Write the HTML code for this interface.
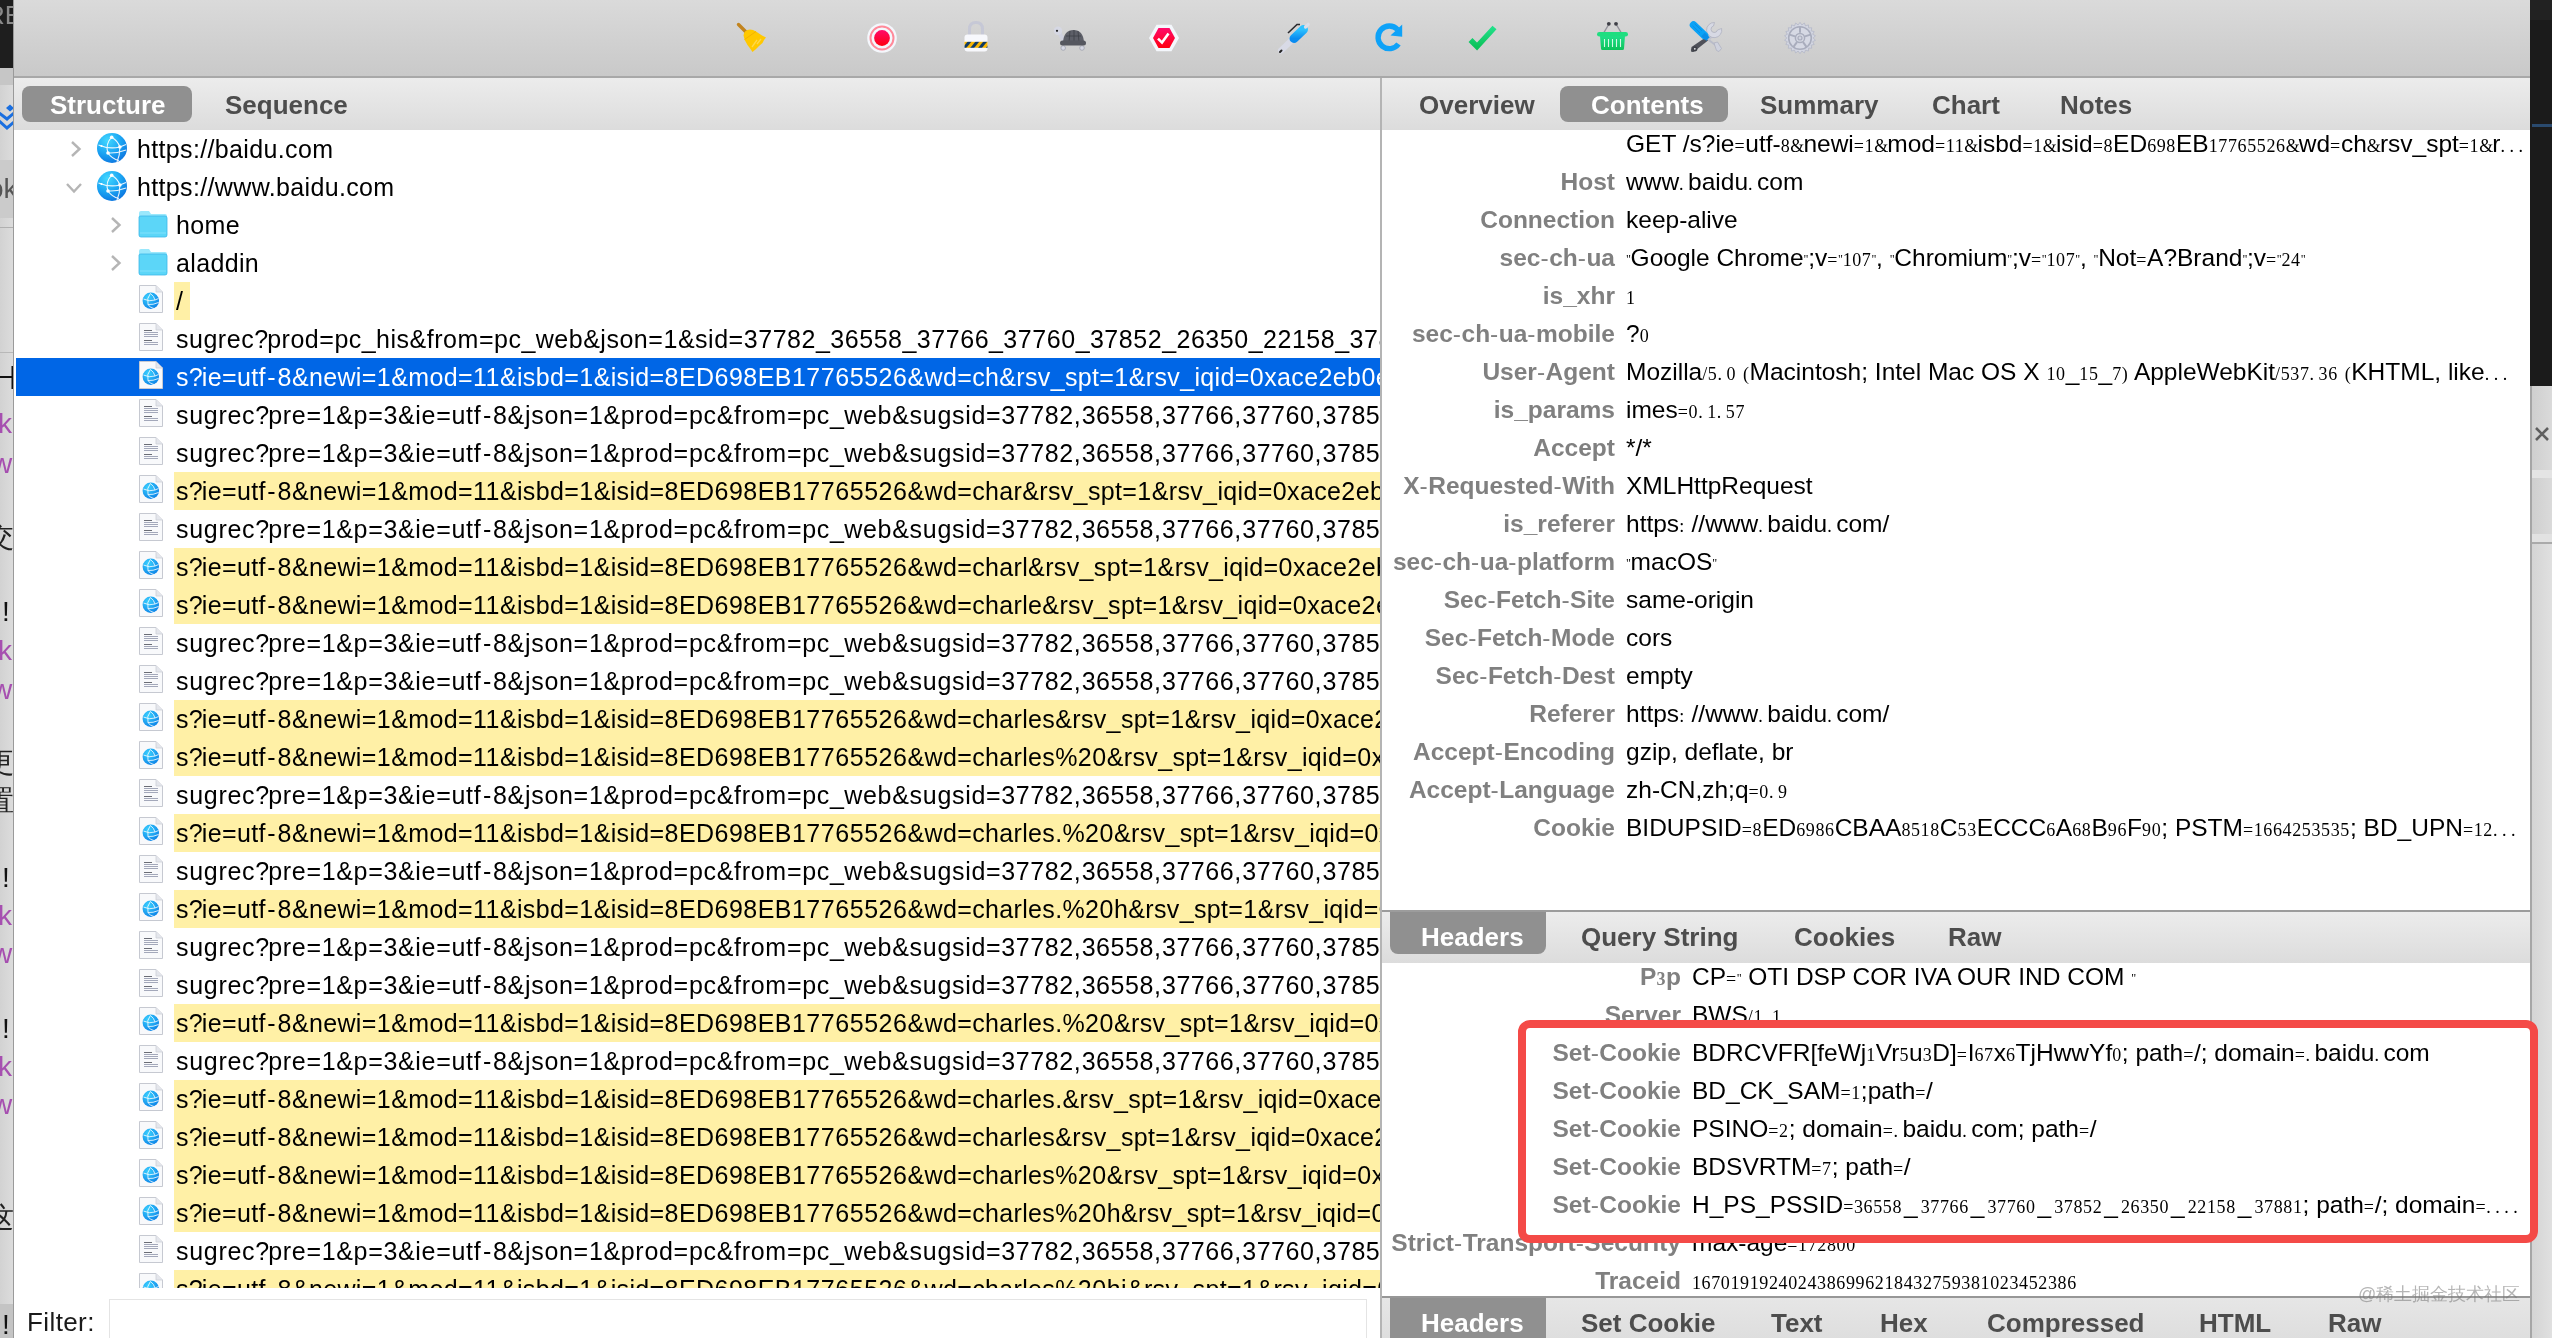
<!DOCTYPE html><html><head><meta charset="utf-8"><style>
*{margin:0;padding:0;box-sizing:border-box}
html,body{width:2552px;height:1338px;overflow:hidden;background:#fff;font-family:"Liberation Sans", sans-serif}
body{-webkit-font-smoothing:antialiased}
.gs{will-change:transform}
.abs{position:absolute}
.tb{position:absolute;left:14px;top:0;width:2516px;height:78px;background:linear-gradient(#dadada,#c9c9c9);border-bottom:2px solid #a8a8a8}
.tabbar{position:absolute;background:linear-gradient(#ececec,#dcdcdc)}
.pill{position:absolute;background:#909090;border-radius:8px}
.tab{position:absolute;font-weight:bold;font-size:26px;color:#4d4d4d;white-space:nowrap;line-height:30px}
.tab.sel{color:#fff}
.row{position:absolute;left:14px;width:1366px;height:38px}
.rt{position:absolute;font-size:25px;line-height:38px;white-space:nowrap;color:#000;letter-spacing:0.35px}
.dg{letter-spacing:0.55px}
.qm{letter-spacing:-0.95px}
.hy{letter-spacing:1.85px;padding-left:1.5px}
.us{letter-spacing:0.35px}
.cm{letter-spacing:1.05px}
.u{padding-left:2px;letter-spacing:3px}
.amp{font-family:"Liberation Serif", serif;font-size:18px;letter-spacing:-0.9px}
.lh{font-weight:normal;letter-spacing:0.5px}
.hl{position:absolute;background:#fff0a6;height:38px}
.lbl{position:absolute;font-weight:bold;font-size:25px;color:#808080;white-space:nowrap;line-height:38px;text-align:right}
.val{position:absolute;font-size:25px;color:#000;white-space:nowrap;line-height:38px}
.s{font-family:"Liberation Serif", serif;font-size:18px;letter-spacing:0.62px}
.q{font-family:"Liberation Serif", serif;font-size:12px;letter-spacing:-0.3px;vertical-align:3px}
.d{font-family:"Liberation Serif", serif;font-size:18px;letter-spacing:4.5px}
.lbl,.val{font-size:24.5px}
</style></head><body><div class="gs" style="position:absolute;left:0;top:0;width:2552px;height:1338px;overflow:hidden">
<div class="abs" style="left:0;top:0;width:14px;height:1338px;background:linear-gradient(90deg,#d2d2d2,#dcdcdc);border-right:1.5px solid #9a9a9a;overflow:hidden"><div class="abs" style="left:0;top:0;width:14px;height:68px;background:#1e1e1e"></div><div class="abs" style="left:-14px;top:0;font-size:26px;color:#8a8a8a;line-height:30px">RE</div><div class="abs" style="left:0;top:68px;width:14px;height:17px;background:#c6c6c6"></div><div class="abs" style="left:0;top:160px;width:14px;height:58px;background:#cbcbcb"></div><div class="abs" style="left:-12px;top:172px;font-size:28px;color:#555;line-height:34px">ok</div><div class="abs" style="left:0;top:227px;width:14px;height:1px;background:#b0b0b0"></div><div class="abs" style="left:0;top:352px;width:14px;height:1px;background:#b8b8b8"></div><div class="abs" style="left:0;top:1304px;width:14px;height:34px;background:#c4c4c4"></div><svg class="abs" style="left:0;top:100px" width="14" height="34" viewBox="0 0 14 34"><path d="M6 8 L10 4.5 L14 8 L10 11.5 Z" fill="#1a6fe0"/><path d="M-2 12 L7 19 L14 13" fill="none" stroke="#1a6fe0" stroke-width="3"/><path d="M-2 20 L7 28 L14 22" fill="none" stroke="#1a6fe0" stroke-width="3"/></svg><svg class="abs" style="left:0;top:362px" width="14" height="30" viewBox="0 0 14 30"><path d="M0 15 L12 15 M12.5 4 L12.5 27" stroke="#111" stroke-width="2"/></svg><div class="abs" style="left:-2px;top:405px;font-size:28px;color:#a64fb0;line-height:38px;white-space:nowrap">k</div><div class="abs" style="left:-8px;top:445px;font-size:28px;color:#a64fb0;line-height:38px;white-space:nowrap">w</div><div class="abs" style="left:-14px;top:518px;font-size:28px;color:#222;line-height:38px;white-space:nowrap">交</div><div class="abs" style="left:2px;top:593px;font-size:28px;color:#111;line-height:38px;white-space:nowrap">!</div><div class="abs" style="left:-2px;top:632px;font-size:28px;color:#a64fb0;line-height:38px;white-space:nowrap">k</div><div class="abs" style="left:-8px;top:671px;font-size:28px;color:#a64fb0;line-height:38px;white-space:nowrap">w</div><div class="abs" style="left:-14px;top:744px;font-size:28px;color:#222;line-height:38px;white-space:nowrap">更</div><div class="abs" style="left:-14px;top:782px;font-size:28px;color:#222;line-height:38px;white-space:nowrap">置</div><div class="abs" style="left:2px;top:859px;font-size:28px;color:#111;line-height:38px;white-space:nowrap">!</div><div class="abs" style="left:-2px;top:897px;font-size:28px;color:#a64fb0;line-height:38px;white-space:nowrap">k</div><div class="abs" style="left:-8px;top:935px;font-size:28px;color:#a64fb0;line-height:38px;white-space:nowrap">w</div><div class="abs" style="left:2px;top:1010px;font-size:28px;color:#111;line-height:38px;white-space:nowrap">!</div><div class="abs" style="left:-2px;top:1048px;font-size:28px;color:#a64fb0;line-height:38px;white-space:nowrap">k</div><div class="abs" style="left:-8px;top:1086px;font-size:28px;color:#a64fb0;line-height:38px;white-space:nowrap">w</div><div class="abs" style="left:-14px;top:1199px;font-size:28px;color:#222;line-height:38px;white-space:nowrap">这</div><div class="abs" style="left:2px;top:1306px;font-size:28px;color:#111;line-height:38px;white-space:nowrap">!</div></div>
<div class="tb"></div>
<div class="tabbar" style="left:14px;top:78px;width:1366px;height:52px"></div>
<div class="pill" style="left:22px;top:86px;width:170px;height:36px"></div>
<div class="tab sel" style="left:50px;top:90px">Structure</div>
<div class="tab" style="left:225px;top:90px">Sequence</div>
<div class="abs" style="left:1380px;top:78px;width:2px;height:1260px;background:#b4b4b4"></div>
<div class="tabbar" style="left:1382px;top:78px;width:1148px;height:52px"></div>
<div class="pill" style="left:1560px;top:86px;width:168px;height:36px"></div>
<div class="tab" style="left:1419px;top:90px">Overview</div>
<div class="tab sel" style="left:1591px;top:90px">Contents</div>
<div class="tab" style="left:1760px;top:90px">Summary</div>
<div class="tab" style="left:1932px;top:90px">Chart</div>
<div class="tab" style="left:2060px;top:90px">Notes</div>
<div class="abs" style="left:2530px;top:0;width:22px;height:386px;background:#1b1b1b"></div>
<div class="abs" style="left:2530px;top:0;width:22px;height:20px;background:#222"></div>
<div class="abs" style="left:2532px;top:124px;width:20px;height:3px;background:#2a4a6e"></div>
<div class="abs" style="left:2530px;top:386px;width:22px;height:952px;background:linear-gradient(90deg,#cfcfcf,#dadada);border-left:2px solid #a6a6a6"></div>
<div class="abs" style="left:2532px;top:470px;width:20px;height:8px;background:#e4e4e4"></div>
<div class="abs" style="left:2532px;top:534px;width:20px;height:8px;background:#e2e2e2"></div>
<div class="abs" style="left:2532px;top:542px;width:20px;height:2px;background:#aaaaaa"></div>
<div class="abs" style="left:2532px;top:544px;width:20px;height:794px;background:linear-gradient(90deg,#d4d4d4,#e0e0e0)"></div>
<svg class="abs" style="left:2530px;top:370px" width="22" height="80" viewBox="0 0 22 80"><path d="M0 16 Q6 16 7 16 L0 16 Z" fill="#aaa"/><path d="M6 58 L18 70 M18 58 L6 70" stroke="#5e5e5e" stroke-width="2.6"/></svg>
<div class="abs" style="left:14px;top:130px;width:1366px;height:1158px;overflow:hidden">
<svg class="abs" style="left:82px;top:2px" width="32" height="32" viewBox="0 0 32 32"><defs><radialGradient id="gb0" cx="0.35" cy="0.25" r="0.85"><stop offset="0" stop-color="#42d8ff"/><stop offset="0.55" stop-color="#1aa2f2"/><stop offset="1" stop-color="#0a6edc"/></radialGradient></defs><circle cx="16" cy="16" r="15" fill="url(#gb0)"/><g fill="none" stroke="#fff" stroke-width="1.1" opacity="0.9"><path d="M15.7 5.2 Q9 12 12 21"/><path d="M15.7 5.2 Q22 9 23.9 15"/><path d="M2.5 13 Q13 17.5 23.9 15 L30 12.5"/><path d="M12 21 Q21 21.5 30 18"/><path d="M12 21 Q16 27 23 28.5"/><path d="M23.9 15 Q24 23 21 30"/></g><g fill="#fff"><circle cx="15.7" cy="5.2" r="1.8"/><circle cx="23.9" cy="15" r="1.8"/><circle cx="12" cy="21" r="1.8"/><circle cx="5.5" cy="14" r="1.1"/></g></svg>
<svg class="abs" style="left:56px;top:10px" width="12" height="18" viewBox="0 0 12 18"><path d="M2 2 L9.5 9 L2 16" fill="none" stroke="#b5b5b5" stroke-width="2.4"/></svg>
<div class="rt" style="left:123px;top:0px;color:#000">https://baidu.com</div>
<svg class="abs" style="left:82px;top:40px" width="32" height="32" viewBox="0 0 32 32"><defs><radialGradient id="gb1" cx="0.35" cy="0.25" r="0.85"><stop offset="0" stop-color="#42d8ff"/><stop offset="0.55" stop-color="#1aa2f2"/><stop offset="1" stop-color="#0a6edc"/></radialGradient></defs><circle cx="16" cy="16" r="15" fill="url(#gb1)"/><g fill="none" stroke="#fff" stroke-width="1.1" opacity="0.9"><path d="M15.7 5.2 Q9 12 12 21"/><path d="M15.7 5.2 Q22 9 23.9 15"/><path d="M2.5 13 Q13 17.5 23.9 15 L30 12.5"/><path d="M12 21 Q21 21.5 30 18"/><path d="M12 21 Q16 27 23 28.5"/><path d="M23.9 15 Q24 23 21 30"/></g><g fill="#fff"><circle cx="15.7" cy="5.2" r="1.8"/><circle cx="23.9" cy="15" r="1.8"/><circle cx="12" cy="21" r="1.8"/><circle cx="5.5" cy="14" r="1.1"/></g></svg>
<svg class="abs" style="left:51px;top:52px" width="18" height="12" viewBox="0 0 18 12"><path d="M2 2 L9 9.5 L16 2" fill="none" stroke="#b5b5b5" stroke-width="2.4"/></svg>
<div class="rt" style="left:123px;top:38px;color:#000">https://www.baidu.com</div>
<svg class="abs" style="left:124px;top:80px" width="30" height="28" viewBox="0 0 30 28"><path d="M1 3 Q1 1 3 1 L11 1 L13 4 L27 4 Q29 4 29 6 L29 25 Q29 27 27 27 L3 27 Q1 27 1 25 Z" fill="#9ae8fc"/><path d="M1 7 Q1 6 3 6 L27 6 Q29 6 29 8 L29 25 Q29 27 27 27 L3 27 Q1 27 1 25 Z" fill="#5cd6f8" stroke="#3cb8e8" stroke-width="0.8"/><line x1="2" y1="23" x2="28" y2="23" stroke="#8ce4fc" stroke-width="0.8"/></svg>
<svg class="abs" style="left:96px;top:86px" width="12" height="18" viewBox="0 0 12 18"><path d="M2 2 L9.5 9 L2 16" fill="none" stroke="#b5b5b5" stroke-width="2.4"/></svg>
<div class="rt" style="left:162px;top:76px;color:#000">home</div>
<svg class="abs" style="left:124px;top:118px" width="30" height="28" viewBox="0 0 30 28"><path d="M1 3 Q1 1 3 1 L11 1 L13 4 L27 4 Q29 4 29 6 L29 25 Q29 27 27 27 L3 27 Q1 27 1 25 Z" fill="#9ae8fc"/><path d="M1 7 Q1 6 3 6 L27 6 Q29 6 29 8 L29 25 Q29 27 27 27 L3 27 Q1 27 1 25 Z" fill="#5cd6f8" stroke="#3cb8e8" stroke-width="0.8"/><line x1="2" y1="23" x2="28" y2="23" stroke="#8ce4fc" stroke-width="0.8"/></svg>
<svg class="abs" style="left:96px;top:124px" width="12" height="18" viewBox="0 0 12 18"><path d="M2 2 L9.5 9 L2 16" fill="none" stroke="#b5b5b5" stroke-width="2.4"/></svg>
<div class="rt" style="left:162px;top:114px;color:#000">aladdin</div>
<svg class="abs" style="left:124px;top:154px" width="26" height="30" viewBox="0 0 26 30"><defs><radialGradient id="dg" cx="0.35" cy="0.3" r="0.8"><stop offset="0" stop-color="#3ad2ff"/><stop offset="1" stop-color="#0a7ee6"/></radialGradient></defs><path d="M1.5 1.5 L18 1.5 L24.5 8 L24.5 28.5 L1.5 28.5 Z" fill="#f8f9fb" stroke="#c6c9d1" stroke-width="1"/><path d="M18 1.5 L18 8 L24.5 8" fill="#e4e6ec" stroke="#cdd0d8" stroke-width="0.8"/><circle cx="12.8" cy="16.8" r="8.2" fill="url(#dg)"/><g fill="none" stroke="#fff" stroke-width="0.9" opacity="0.9"><path d="M12.4 9.5 Q8.5 14 10 20.5"/><path d="M12.4 9.5 Q16 12 17 16"/><path d="M5.5 15 Q11 18 17 16 L20.5 14.5"/><path d="M10 20.5 Q15 21 20.5 18.5"/><path d="M10 20.5 Q12 24 16 24.5"/></g></svg>
<div class="abs" style="left:160px;top:152px;width:16px;height:38px;background:#fff0a6"></div>
<div class="rt" style="left:162px;top:152px;color:#000">/</div>
<svg class="abs" style="left:124px;top:192px" width="26" height="30" viewBox="0 0 26 30"><path d="M1.5 1.5 L18 1.5 L24.5 8 L24.5 28.5 L1.5 28.5 Z" fill="#f8f9fb" stroke="#c6c9d1" stroke-width="1"/><path d="M18 1.5 L18 8 L24.5 8" fill="#e4e6ec" stroke="#cdd0d8" stroke-width="0.8"/><g stroke-width="1"><line x1="6" y1="8.5" x2="14" y2="8.5" stroke="#6a6d76"/><line x1="6" y1="10.5" x2="20" y2="10.5" stroke="#a3a8ba"/><line x1="6" y1="12.5" x2="20" y2="12.5" stroke="#a3a8ba"/><line x1="6" y1="14.5" x2="20" y2="14.5" stroke="#a3a8ba"/><line x1="6" y1="18.5" x2="14" y2="18.5" stroke="#6a6d76"/><line x1="6" y1="20.5" x2="20" y2="20.5" stroke="#a3a8ba"/><line x1="6" y1="22.5" x2="20" y2="22.5" stroke="#a3a8ba"/></g></svg>
<div class="rt" style="left:162px;top:190px;color:#000;letter-spacing:0.52px">sugrec<span class="qm">?</span>prod=pc<span class="us">_</span>his&amp;from=pc<span class="us">_</span>web&amp;json=<span class="dg">1</span>&amp;sid=<span class="dg">37782</span><span class="us">_</span><span class="dg">36558</span><span class="us">_</span><span class="dg">37766</span><span class="us">_</span><span class="dg">37760</span><span class="us">_</span><span class="dg">37852</span><span class="us">_</span><span class="dg">26350</span><span class="us">_</span><span class="dg">22158</span><span class="us">_</span><span class="dg">37881</span></div>
<div class="abs" style="left:2px;top:228px;width:1364px;height:38px;background:#0066e6"></div>
<svg class="abs" style="left:124px;top:230px" width="26" height="30" viewBox="0 0 26 30"><defs><radialGradient id="dg" cx="0.35" cy="0.3" r="0.8"><stop offset="0" stop-color="#3ad2ff"/><stop offset="1" stop-color="#0a7ee6"/></radialGradient></defs><path d="M1.5 1.5 L18 1.5 L24.5 8 L24.5 28.5 L1.5 28.5 Z" fill="#f8f9fb" stroke="#c6c9d1" stroke-width="1"/><path d="M18 1.5 L18 8 L24.5 8" fill="#e4e6ec" stroke="#cdd0d8" stroke-width="0.8"/><circle cx="12.8" cy="16.8" r="8.2" fill="url(#dg)"/><g fill="none" stroke="#fff" stroke-width="0.9" opacity="0.9"><path d="M12.4 9.5 Q8.5 14 10 20.5"/><path d="M12.4 9.5 Q16 12 17 16"/><path d="M5.5 15 Q11 18 17 16 L20.5 14.5"/><path d="M10 20.5 Q15 21 20.5 18.5"/><path d="M10 20.5 Q12 24 16 24.5"/></g></svg>
<div class="rt" style="left:162px;top:228px;color:#fff">s<span class="qm">?</span>ie=utf<span class="hy">-</span><span class="dg">8</span>&amp;newi=<span class="dg">1</span>&amp;mod=<span class="dg">11</span>&amp;isbd=<span class="dg">1</span>&amp;isid=<span class="dg">8</span>ED<span class="dg">698</span>EB<span class="dg">17765526</span>&amp;wd=ch&amp;rsv<span class="us">_</span>spt=<span class="dg">1</span>&amp;rsv<span class="us">_</span>iqid=<span class="dg">0</span>xace<span class="dg">2</span>eb<span class="dg">0</span>e<span class="dg">0000</span></div>
<svg class="abs" style="left:124px;top:268px" width="26" height="30" viewBox="0 0 26 30"><path d="M1.5 1.5 L18 1.5 L24.5 8 L24.5 28.5 L1.5 28.5 Z" fill="#f8f9fb" stroke="#c6c9d1" stroke-width="1"/><path d="M18 1.5 L18 8 L24.5 8" fill="#e4e6ec" stroke="#cdd0d8" stroke-width="0.8"/><g stroke-width="1"><line x1="6" y1="8.5" x2="14" y2="8.5" stroke="#6a6d76"/><line x1="6" y1="10.5" x2="20" y2="10.5" stroke="#a3a8ba"/><line x1="6" y1="12.5" x2="20" y2="12.5" stroke="#a3a8ba"/><line x1="6" y1="14.5" x2="20" y2="14.5" stroke="#a3a8ba"/><line x1="6" y1="18.5" x2="14" y2="18.5" stroke="#6a6d76"/><line x1="6" y1="20.5" x2="20" y2="20.5" stroke="#a3a8ba"/><line x1="6" y1="22.5" x2="20" y2="22.5" stroke="#a3a8ba"/></g></svg>
<div class="rt" style="left:162px;top:266px;color:#000;letter-spacing:0.7px">sugrec<span class="qm">?</span>pre=<span class="dg">1</span>&amp;p=<span class="dg">3</span>&amp;ie=utf<span class="hy">-</span><span class="dg">8</span>&amp;json=<span class="dg">1</span>&amp;prod=pc&amp;from=pc<span class="us">_</span>web&amp;sugsid=<span class="dg">37782</span><span class="cm">,</span><span class="dg">36558</span><span class="cm">,</span><span class="dg">37766</span><span class="cm">,</span><span class="dg">37760</span><span class="cm">,</span><span class="dg">37852</span><span class="cm">,</span><span class="dg">26350</span><span class="cm">,</span><span class="dg">22158</span><span class="cm">,</span><span class="dg">37881</span></div>
<svg class="abs" style="left:124px;top:306px" width="26" height="30" viewBox="0 0 26 30"><path d="M1.5 1.5 L18 1.5 L24.5 8 L24.5 28.5 L1.5 28.5 Z" fill="#f8f9fb" stroke="#c6c9d1" stroke-width="1"/><path d="M18 1.5 L18 8 L24.5 8" fill="#e4e6ec" stroke="#cdd0d8" stroke-width="0.8"/><g stroke-width="1"><line x1="6" y1="8.5" x2="14" y2="8.5" stroke="#6a6d76"/><line x1="6" y1="10.5" x2="20" y2="10.5" stroke="#a3a8ba"/><line x1="6" y1="12.5" x2="20" y2="12.5" stroke="#a3a8ba"/><line x1="6" y1="14.5" x2="20" y2="14.5" stroke="#a3a8ba"/><line x1="6" y1="18.5" x2="14" y2="18.5" stroke="#6a6d76"/><line x1="6" y1="20.5" x2="20" y2="20.5" stroke="#a3a8ba"/><line x1="6" y1="22.5" x2="20" y2="22.5" stroke="#a3a8ba"/></g></svg>
<div class="rt" style="left:162px;top:304px;color:#000;letter-spacing:0.7px">sugrec<span class="qm">?</span>pre=<span class="dg">1</span>&amp;p=<span class="dg">3</span>&amp;ie=utf<span class="hy">-</span><span class="dg">8</span>&amp;json=<span class="dg">1</span>&amp;prod=pc&amp;from=pc<span class="us">_</span>web&amp;sugsid=<span class="dg">37782</span><span class="cm">,</span><span class="dg">36558</span><span class="cm">,</span><span class="dg">37766</span><span class="cm">,</span><span class="dg">37760</span><span class="cm">,</span><span class="dg">37852</span><span class="cm">,</span><span class="dg">26350</span><span class="cm">,</span><span class="dg">22158</span><span class="cm">,</span><span class="dg">37881</span></div>
<svg class="abs" style="left:124px;top:344px" width="26" height="30" viewBox="0 0 26 30"><defs><radialGradient id="dg" cx="0.35" cy="0.3" r="0.8"><stop offset="0" stop-color="#3ad2ff"/><stop offset="1" stop-color="#0a7ee6"/></radialGradient></defs><path d="M1.5 1.5 L18 1.5 L24.5 8 L24.5 28.5 L1.5 28.5 Z" fill="#f8f9fb" stroke="#c6c9d1" stroke-width="1"/><path d="M18 1.5 L18 8 L24.5 8" fill="#e4e6ec" stroke="#cdd0d8" stroke-width="0.8"/><circle cx="12.8" cy="16.8" r="8.2" fill="url(#dg)"/><g fill="none" stroke="#fff" stroke-width="0.9" opacity="0.9"><path d="M12.4 9.5 Q8.5 14 10 20.5"/><path d="M12.4 9.5 Q16 12 17 16"/><path d="M5.5 15 Q11 18 17 16 L20.5 14.5"/><path d="M10 20.5 Q15 21 20.5 18.5"/><path d="M10 20.5 Q12 24 16 24.5"/></g></svg>
<div class="abs" style="left:160px;top:342px;width:1206px;height:38px;background:#fff0a6"></div>
<div class="rt" style="left:162px;top:342px;color:#000">s<span class="qm">?</span>ie=utf<span class="hy">-</span><span class="dg">8</span>&amp;newi=<span class="dg">1</span>&amp;mod=<span class="dg">11</span>&amp;isbd=<span class="dg">1</span>&amp;isid=<span class="dg">8</span>ED<span class="dg">698</span>EB<span class="dg">17765526</span>&amp;wd=char&amp;rsv<span class="us">_</span>spt=<span class="dg">1</span>&amp;rsv<span class="us">_</span>iqid=<span class="dg">0</span>xace<span class="dg">2</span>eb<span class="dg">0</span>e<span class="dg">0000</span></div>
<svg class="abs" style="left:124px;top:382px" width="26" height="30" viewBox="0 0 26 30"><path d="M1.5 1.5 L18 1.5 L24.5 8 L24.5 28.5 L1.5 28.5 Z" fill="#f8f9fb" stroke="#c6c9d1" stroke-width="1"/><path d="M18 1.5 L18 8 L24.5 8" fill="#e4e6ec" stroke="#cdd0d8" stroke-width="0.8"/><g stroke-width="1"><line x1="6" y1="8.5" x2="14" y2="8.5" stroke="#6a6d76"/><line x1="6" y1="10.5" x2="20" y2="10.5" stroke="#a3a8ba"/><line x1="6" y1="12.5" x2="20" y2="12.5" stroke="#a3a8ba"/><line x1="6" y1="14.5" x2="20" y2="14.5" stroke="#a3a8ba"/><line x1="6" y1="18.5" x2="14" y2="18.5" stroke="#6a6d76"/><line x1="6" y1="20.5" x2="20" y2="20.5" stroke="#a3a8ba"/><line x1="6" y1="22.5" x2="20" y2="22.5" stroke="#a3a8ba"/></g></svg>
<div class="rt" style="left:162px;top:380px;color:#000;letter-spacing:0.7px">sugrec<span class="qm">?</span>pre=<span class="dg">1</span>&amp;p=<span class="dg">3</span>&amp;ie=utf<span class="hy">-</span><span class="dg">8</span>&amp;json=<span class="dg">1</span>&amp;prod=pc&amp;from=pc<span class="us">_</span>web&amp;sugsid=<span class="dg">37782</span><span class="cm">,</span><span class="dg">36558</span><span class="cm">,</span><span class="dg">37766</span><span class="cm">,</span><span class="dg">37760</span><span class="cm">,</span><span class="dg">37852</span><span class="cm">,</span><span class="dg">26350</span><span class="cm">,</span><span class="dg">22158</span><span class="cm">,</span><span class="dg">37881</span></div>
<svg class="abs" style="left:124px;top:420px" width="26" height="30" viewBox="0 0 26 30"><defs><radialGradient id="dg" cx="0.35" cy="0.3" r="0.8"><stop offset="0" stop-color="#3ad2ff"/><stop offset="1" stop-color="#0a7ee6"/></radialGradient></defs><path d="M1.5 1.5 L18 1.5 L24.5 8 L24.5 28.5 L1.5 28.5 Z" fill="#f8f9fb" stroke="#c6c9d1" stroke-width="1"/><path d="M18 1.5 L18 8 L24.5 8" fill="#e4e6ec" stroke="#cdd0d8" stroke-width="0.8"/><circle cx="12.8" cy="16.8" r="8.2" fill="url(#dg)"/><g fill="none" stroke="#fff" stroke-width="0.9" opacity="0.9"><path d="M12.4 9.5 Q8.5 14 10 20.5"/><path d="M12.4 9.5 Q16 12 17 16"/><path d="M5.5 15 Q11 18 17 16 L20.5 14.5"/><path d="M10 20.5 Q15 21 20.5 18.5"/><path d="M10 20.5 Q12 24 16 24.5"/></g></svg>
<div class="abs" style="left:160px;top:418px;width:1206px;height:38px;background:#fff0a6"></div>
<div class="rt" style="left:162px;top:418px;color:#000">s<span class="qm">?</span>ie=utf<span class="hy">-</span><span class="dg">8</span>&amp;newi=<span class="dg">1</span>&amp;mod=<span class="dg">11</span>&amp;isbd=<span class="dg">1</span>&amp;isid=<span class="dg">8</span>ED<span class="dg">698</span>EB<span class="dg">17765526</span>&amp;wd=charl&amp;rsv<span class="us">_</span>spt=<span class="dg">1</span>&amp;rsv<span class="us">_</span>iqid=<span class="dg">0</span>xace<span class="dg">2</span>eb<span class="dg">0</span>e<span class="dg">0000</span></div>
<svg class="abs" style="left:124px;top:458px" width="26" height="30" viewBox="0 0 26 30"><defs><radialGradient id="dg" cx="0.35" cy="0.3" r="0.8"><stop offset="0" stop-color="#3ad2ff"/><stop offset="1" stop-color="#0a7ee6"/></radialGradient></defs><path d="M1.5 1.5 L18 1.5 L24.5 8 L24.5 28.5 L1.5 28.5 Z" fill="#f8f9fb" stroke="#c6c9d1" stroke-width="1"/><path d="M18 1.5 L18 8 L24.5 8" fill="#e4e6ec" stroke="#cdd0d8" stroke-width="0.8"/><circle cx="12.8" cy="16.8" r="8.2" fill="url(#dg)"/><g fill="none" stroke="#fff" stroke-width="0.9" opacity="0.9"><path d="M12.4 9.5 Q8.5 14 10 20.5"/><path d="M12.4 9.5 Q16 12 17 16"/><path d="M5.5 15 Q11 18 17 16 L20.5 14.5"/><path d="M10 20.5 Q15 21 20.5 18.5"/><path d="M10 20.5 Q12 24 16 24.5"/></g></svg>
<div class="abs" style="left:160px;top:456px;width:1206px;height:38px;background:#fff0a6"></div>
<div class="rt" style="left:162px;top:456px;color:#000">s<span class="qm">?</span>ie=utf<span class="hy">-</span><span class="dg">8</span>&amp;newi=<span class="dg">1</span>&amp;mod=<span class="dg">11</span>&amp;isbd=<span class="dg">1</span>&amp;isid=<span class="dg">8</span>ED<span class="dg">698</span>EB<span class="dg">17765526</span>&amp;wd=charle&amp;rsv<span class="us">_</span>spt=<span class="dg">1</span>&amp;rsv<span class="us">_</span>iqid=<span class="dg">0</span>xace<span class="dg">2</span>eb<span class="dg">0</span>e<span class="dg">0000</span></div>
<svg class="abs" style="left:124px;top:496px" width="26" height="30" viewBox="0 0 26 30"><path d="M1.5 1.5 L18 1.5 L24.5 8 L24.5 28.5 L1.5 28.5 Z" fill="#f8f9fb" stroke="#c6c9d1" stroke-width="1"/><path d="M18 1.5 L18 8 L24.5 8" fill="#e4e6ec" stroke="#cdd0d8" stroke-width="0.8"/><g stroke-width="1"><line x1="6" y1="8.5" x2="14" y2="8.5" stroke="#6a6d76"/><line x1="6" y1="10.5" x2="20" y2="10.5" stroke="#a3a8ba"/><line x1="6" y1="12.5" x2="20" y2="12.5" stroke="#a3a8ba"/><line x1="6" y1="14.5" x2="20" y2="14.5" stroke="#a3a8ba"/><line x1="6" y1="18.5" x2="14" y2="18.5" stroke="#6a6d76"/><line x1="6" y1="20.5" x2="20" y2="20.5" stroke="#a3a8ba"/><line x1="6" y1="22.5" x2="20" y2="22.5" stroke="#a3a8ba"/></g></svg>
<div class="rt" style="left:162px;top:494px;color:#000;letter-spacing:0.7px">sugrec<span class="qm">?</span>pre=<span class="dg">1</span>&amp;p=<span class="dg">3</span>&amp;ie=utf<span class="hy">-</span><span class="dg">8</span>&amp;json=<span class="dg">1</span>&amp;prod=pc&amp;from=pc<span class="us">_</span>web&amp;sugsid=<span class="dg">37782</span><span class="cm">,</span><span class="dg">36558</span><span class="cm">,</span><span class="dg">37766</span><span class="cm">,</span><span class="dg">37760</span><span class="cm">,</span><span class="dg">37852</span><span class="cm">,</span><span class="dg">26350</span><span class="cm">,</span><span class="dg">22158</span><span class="cm">,</span><span class="dg">37881</span></div>
<svg class="abs" style="left:124px;top:534px" width="26" height="30" viewBox="0 0 26 30"><path d="M1.5 1.5 L18 1.5 L24.5 8 L24.5 28.5 L1.5 28.5 Z" fill="#f8f9fb" stroke="#c6c9d1" stroke-width="1"/><path d="M18 1.5 L18 8 L24.5 8" fill="#e4e6ec" stroke="#cdd0d8" stroke-width="0.8"/><g stroke-width="1"><line x1="6" y1="8.5" x2="14" y2="8.5" stroke="#6a6d76"/><line x1="6" y1="10.5" x2="20" y2="10.5" stroke="#a3a8ba"/><line x1="6" y1="12.5" x2="20" y2="12.5" stroke="#a3a8ba"/><line x1="6" y1="14.5" x2="20" y2="14.5" stroke="#a3a8ba"/><line x1="6" y1="18.5" x2="14" y2="18.5" stroke="#6a6d76"/><line x1="6" y1="20.5" x2="20" y2="20.5" stroke="#a3a8ba"/><line x1="6" y1="22.5" x2="20" y2="22.5" stroke="#a3a8ba"/></g></svg>
<div class="rt" style="left:162px;top:532px;color:#000;letter-spacing:0.7px">sugrec<span class="qm">?</span>pre=<span class="dg">1</span>&amp;p=<span class="dg">3</span>&amp;ie=utf<span class="hy">-</span><span class="dg">8</span>&amp;json=<span class="dg">1</span>&amp;prod=pc&amp;from=pc<span class="us">_</span>web&amp;sugsid=<span class="dg">37782</span><span class="cm">,</span><span class="dg">36558</span><span class="cm">,</span><span class="dg">37766</span><span class="cm">,</span><span class="dg">37760</span><span class="cm">,</span><span class="dg">37852</span><span class="cm">,</span><span class="dg">26350</span><span class="cm">,</span><span class="dg">22158</span><span class="cm">,</span><span class="dg">37881</span></div>
<svg class="abs" style="left:124px;top:572px" width="26" height="30" viewBox="0 0 26 30"><defs><radialGradient id="dg" cx="0.35" cy="0.3" r="0.8"><stop offset="0" stop-color="#3ad2ff"/><stop offset="1" stop-color="#0a7ee6"/></radialGradient></defs><path d="M1.5 1.5 L18 1.5 L24.5 8 L24.5 28.5 L1.5 28.5 Z" fill="#f8f9fb" stroke="#c6c9d1" stroke-width="1"/><path d="M18 1.5 L18 8 L24.5 8" fill="#e4e6ec" stroke="#cdd0d8" stroke-width="0.8"/><circle cx="12.8" cy="16.8" r="8.2" fill="url(#dg)"/><g fill="none" stroke="#fff" stroke-width="0.9" opacity="0.9"><path d="M12.4 9.5 Q8.5 14 10 20.5"/><path d="M12.4 9.5 Q16 12 17 16"/><path d="M5.5 15 Q11 18 17 16 L20.5 14.5"/><path d="M10 20.5 Q15 21 20.5 18.5"/><path d="M10 20.5 Q12 24 16 24.5"/></g></svg>
<div class="abs" style="left:160px;top:570px;width:1206px;height:38px;background:#fff0a6"></div>
<div class="rt" style="left:162px;top:570px;color:#000">s<span class="qm">?</span>ie=utf<span class="hy">-</span><span class="dg">8</span>&amp;newi=<span class="dg">1</span>&amp;mod=<span class="dg">11</span>&amp;isbd=<span class="dg">1</span>&amp;isid=<span class="dg">8</span>ED<span class="dg">698</span>EB<span class="dg">17765526</span>&amp;wd=charles&amp;rsv<span class="us">_</span>spt=<span class="dg">1</span>&amp;rsv<span class="us">_</span>iqid=<span class="dg">0</span>xace<span class="dg">2</span>eb<span class="dg">0</span>e<span class="dg">0000</span></div>
<svg class="abs" style="left:124px;top:610px" width="26" height="30" viewBox="0 0 26 30"><defs><radialGradient id="dg" cx="0.35" cy="0.3" r="0.8"><stop offset="0" stop-color="#3ad2ff"/><stop offset="1" stop-color="#0a7ee6"/></radialGradient></defs><path d="M1.5 1.5 L18 1.5 L24.5 8 L24.5 28.5 L1.5 28.5 Z" fill="#f8f9fb" stroke="#c6c9d1" stroke-width="1"/><path d="M18 1.5 L18 8 L24.5 8" fill="#e4e6ec" stroke="#cdd0d8" stroke-width="0.8"/><circle cx="12.8" cy="16.8" r="8.2" fill="url(#dg)"/><g fill="none" stroke="#fff" stroke-width="0.9" opacity="0.9"><path d="M12.4 9.5 Q8.5 14 10 20.5"/><path d="M12.4 9.5 Q16 12 17 16"/><path d="M5.5 15 Q11 18 17 16 L20.5 14.5"/><path d="M10 20.5 Q15 21 20.5 18.5"/><path d="M10 20.5 Q12 24 16 24.5"/></g></svg>
<div class="abs" style="left:160px;top:608px;width:1206px;height:38px;background:#fff0a6"></div>
<div class="rt" style="left:162px;top:608px;color:#000">s<span class="qm">?</span>ie=utf<span class="hy">-</span><span class="dg">8</span>&amp;newi=<span class="dg">1</span>&amp;mod=<span class="dg">11</span>&amp;isbd=<span class="dg">1</span>&amp;isid=<span class="dg">8</span>ED<span class="dg">698</span>EB<span class="dg">17765526</span>&amp;wd=charles%<span class="dg">20</span>&amp;rsv<span class="us">_</span>spt=<span class="dg">1</span>&amp;rsv<span class="us">_</span>iqid=<span class="dg">0</span>xace<span class="dg">2</span>eb<span class="dg">0</span>e<span class="dg">0000</span></div>
<svg class="abs" style="left:124px;top:648px" width="26" height="30" viewBox="0 0 26 30"><path d="M1.5 1.5 L18 1.5 L24.5 8 L24.5 28.5 L1.5 28.5 Z" fill="#f8f9fb" stroke="#c6c9d1" stroke-width="1"/><path d="M18 1.5 L18 8 L24.5 8" fill="#e4e6ec" stroke="#cdd0d8" stroke-width="0.8"/><g stroke-width="1"><line x1="6" y1="8.5" x2="14" y2="8.5" stroke="#6a6d76"/><line x1="6" y1="10.5" x2="20" y2="10.5" stroke="#a3a8ba"/><line x1="6" y1="12.5" x2="20" y2="12.5" stroke="#a3a8ba"/><line x1="6" y1="14.5" x2="20" y2="14.5" stroke="#a3a8ba"/><line x1="6" y1="18.5" x2="14" y2="18.5" stroke="#6a6d76"/><line x1="6" y1="20.5" x2="20" y2="20.5" stroke="#a3a8ba"/><line x1="6" y1="22.5" x2="20" y2="22.5" stroke="#a3a8ba"/></g></svg>
<div class="rt" style="left:162px;top:646px;color:#000;letter-spacing:0.7px">sugrec<span class="qm">?</span>pre=<span class="dg">1</span>&amp;p=<span class="dg">3</span>&amp;ie=utf<span class="hy">-</span><span class="dg">8</span>&amp;json=<span class="dg">1</span>&amp;prod=pc&amp;from=pc<span class="us">_</span>web&amp;sugsid=<span class="dg">37782</span><span class="cm">,</span><span class="dg">36558</span><span class="cm">,</span><span class="dg">37766</span><span class="cm">,</span><span class="dg">37760</span><span class="cm">,</span><span class="dg">37852</span><span class="cm">,</span><span class="dg">26350</span><span class="cm">,</span><span class="dg">22158</span><span class="cm">,</span><span class="dg">37881</span></div>
<svg class="abs" style="left:124px;top:686px" width="26" height="30" viewBox="0 0 26 30"><defs><radialGradient id="dg" cx="0.35" cy="0.3" r="0.8"><stop offset="0" stop-color="#3ad2ff"/><stop offset="1" stop-color="#0a7ee6"/></radialGradient></defs><path d="M1.5 1.5 L18 1.5 L24.5 8 L24.5 28.5 L1.5 28.5 Z" fill="#f8f9fb" stroke="#c6c9d1" stroke-width="1"/><path d="M18 1.5 L18 8 L24.5 8" fill="#e4e6ec" stroke="#cdd0d8" stroke-width="0.8"/><circle cx="12.8" cy="16.8" r="8.2" fill="url(#dg)"/><g fill="none" stroke="#fff" stroke-width="0.9" opacity="0.9"><path d="M12.4 9.5 Q8.5 14 10 20.5"/><path d="M12.4 9.5 Q16 12 17 16"/><path d="M5.5 15 Q11 18 17 16 L20.5 14.5"/><path d="M10 20.5 Q15 21 20.5 18.5"/><path d="M10 20.5 Q12 24 16 24.5"/></g></svg>
<div class="abs" style="left:160px;top:684px;width:1206px;height:38px;background:#fff0a6"></div>
<div class="rt" style="left:162px;top:684px;color:#000">s<span class="qm">?</span>ie=utf<span class="hy">-</span><span class="dg">8</span>&amp;newi=<span class="dg">1</span>&amp;mod=<span class="dg">11</span>&amp;isbd=<span class="dg">1</span>&amp;isid=<span class="dg">8</span>ED<span class="dg">698</span>EB<span class="dg">17765526</span>&amp;wd=charles.%<span class="dg">20</span>&amp;rsv<span class="us">_</span>spt=<span class="dg">1</span>&amp;rsv<span class="us">_</span>iqid=<span class="dg">0</span>xace<span class="dg">2</span>eb<span class="dg">0</span>e<span class="dg">0000</span></div>
<svg class="abs" style="left:124px;top:724px" width="26" height="30" viewBox="0 0 26 30"><path d="M1.5 1.5 L18 1.5 L24.5 8 L24.5 28.5 L1.5 28.5 Z" fill="#f8f9fb" stroke="#c6c9d1" stroke-width="1"/><path d="M18 1.5 L18 8 L24.5 8" fill="#e4e6ec" stroke="#cdd0d8" stroke-width="0.8"/><g stroke-width="1"><line x1="6" y1="8.5" x2="14" y2="8.5" stroke="#6a6d76"/><line x1="6" y1="10.5" x2="20" y2="10.5" stroke="#a3a8ba"/><line x1="6" y1="12.5" x2="20" y2="12.5" stroke="#a3a8ba"/><line x1="6" y1="14.5" x2="20" y2="14.5" stroke="#a3a8ba"/><line x1="6" y1="18.5" x2="14" y2="18.5" stroke="#6a6d76"/><line x1="6" y1="20.5" x2="20" y2="20.5" stroke="#a3a8ba"/><line x1="6" y1="22.5" x2="20" y2="22.5" stroke="#a3a8ba"/></g></svg>
<div class="rt" style="left:162px;top:722px;color:#000;letter-spacing:0.7px">sugrec<span class="qm">?</span>pre=<span class="dg">1</span>&amp;p=<span class="dg">3</span>&amp;ie=utf<span class="hy">-</span><span class="dg">8</span>&amp;json=<span class="dg">1</span>&amp;prod=pc&amp;from=pc<span class="us">_</span>web&amp;sugsid=<span class="dg">37782</span><span class="cm">,</span><span class="dg">36558</span><span class="cm">,</span><span class="dg">37766</span><span class="cm">,</span><span class="dg">37760</span><span class="cm">,</span><span class="dg">37852</span><span class="cm">,</span><span class="dg">26350</span><span class="cm">,</span><span class="dg">22158</span><span class="cm">,</span><span class="dg">37881</span></div>
<svg class="abs" style="left:124px;top:762px" width="26" height="30" viewBox="0 0 26 30"><defs><radialGradient id="dg" cx="0.35" cy="0.3" r="0.8"><stop offset="0" stop-color="#3ad2ff"/><stop offset="1" stop-color="#0a7ee6"/></radialGradient></defs><path d="M1.5 1.5 L18 1.5 L24.5 8 L24.5 28.5 L1.5 28.5 Z" fill="#f8f9fb" stroke="#c6c9d1" stroke-width="1"/><path d="M18 1.5 L18 8 L24.5 8" fill="#e4e6ec" stroke="#cdd0d8" stroke-width="0.8"/><circle cx="12.8" cy="16.8" r="8.2" fill="url(#dg)"/><g fill="none" stroke="#fff" stroke-width="0.9" opacity="0.9"><path d="M12.4 9.5 Q8.5 14 10 20.5"/><path d="M12.4 9.5 Q16 12 17 16"/><path d="M5.5 15 Q11 18 17 16 L20.5 14.5"/><path d="M10 20.5 Q15 21 20.5 18.5"/><path d="M10 20.5 Q12 24 16 24.5"/></g></svg>
<div class="abs" style="left:160px;top:760px;width:1206px;height:38px;background:#fff0a6"></div>
<div class="rt" style="left:162px;top:760px;color:#000">s<span class="qm">?</span>ie=utf<span class="hy">-</span><span class="dg">8</span>&amp;newi=<span class="dg">1</span>&amp;mod=<span class="dg">11</span>&amp;isbd=<span class="dg">1</span>&amp;isid=<span class="dg">8</span>ED<span class="dg">698</span>EB<span class="dg">17765526</span>&amp;wd=charles.%<span class="dg">20</span>h&amp;rsv<span class="us">_</span>spt=<span class="dg">1</span>&amp;rsv<span class="us">_</span>iqid=<span class="dg">0</span>xace<span class="dg">2</span>eb<span class="dg">0</span>e<span class="dg">0000</span></div>
<svg class="abs" style="left:124px;top:800px" width="26" height="30" viewBox="0 0 26 30"><path d="M1.5 1.5 L18 1.5 L24.5 8 L24.5 28.5 L1.5 28.5 Z" fill="#f8f9fb" stroke="#c6c9d1" stroke-width="1"/><path d="M18 1.5 L18 8 L24.5 8" fill="#e4e6ec" stroke="#cdd0d8" stroke-width="0.8"/><g stroke-width="1"><line x1="6" y1="8.5" x2="14" y2="8.5" stroke="#6a6d76"/><line x1="6" y1="10.5" x2="20" y2="10.5" stroke="#a3a8ba"/><line x1="6" y1="12.5" x2="20" y2="12.5" stroke="#a3a8ba"/><line x1="6" y1="14.5" x2="20" y2="14.5" stroke="#a3a8ba"/><line x1="6" y1="18.5" x2="14" y2="18.5" stroke="#6a6d76"/><line x1="6" y1="20.5" x2="20" y2="20.5" stroke="#a3a8ba"/><line x1="6" y1="22.5" x2="20" y2="22.5" stroke="#a3a8ba"/></g></svg>
<div class="rt" style="left:162px;top:798px;color:#000;letter-spacing:0.7px">sugrec<span class="qm">?</span>pre=<span class="dg">1</span>&amp;p=<span class="dg">3</span>&amp;ie=utf<span class="hy">-</span><span class="dg">8</span>&amp;json=<span class="dg">1</span>&amp;prod=pc&amp;from=pc<span class="us">_</span>web&amp;sugsid=<span class="dg">37782</span><span class="cm">,</span><span class="dg">36558</span><span class="cm">,</span><span class="dg">37766</span><span class="cm">,</span><span class="dg">37760</span><span class="cm">,</span><span class="dg">37852</span><span class="cm">,</span><span class="dg">26350</span><span class="cm">,</span><span class="dg">22158</span><span class="cm">,</span><span class="dg">37881</span></div>
<svg class="abs" style="left:124px;top:838px" width="26" height="30" viewBox="0 0 26 30"><path d="M1.5 1.5 L18 1.5 L24.5 8 L24.5 28.5 L1.5 28.5 Z" fill="#f8f9fb" stroke="#c6c9d1" stroke-width="1"/><path d="M18 1.5 L18 8 L24.5 8" fill="#e4e6ec" stroke="#cdd0d8" stroke-width="0.8"/><g stroke-width="1"><line x1="6" y1="8.5" x2="14" y2="8.5" stroke="#6a6d76"/><line x1="6" y1="10.5" x2="20" y2="10.5" stroke="#a3a8ba"/><line x1="6" y1="12.5" x2="20" y2="12.5" stroke="#a3a8ba"/><line x1="6" y1="14.5" x2="20" y2="14.5" stroke="#a3a8ba"/><line x1="6" y1="18.5" x2="14" y2="18.5" stroke="#6a6d76"/><line x1="6" y1="20.5" x2="20" y2="20.5" stroke="#a3a8ba"/><line x1="6" y1="22.5" x2="20" y2="22.5" stroke="#a3a8ba"/></g></svg>
<div class="rt" style="left:162px;top:836px;color:#000;letter-spacing:0.7px">sugrec<span class="qm">?</span>pre=<span class="dg">1</span>&amp;p=<span class="dg">3</span>&amp;ie=utf<span class="hy">-</span><span class="dg">8</span>&amp;json=<span class="dg">1</span>&amp;prod=pc&amp;from=pc<span class="us">_</span>web&amp;sugsid=<span class="dg">37782</span><span class="cm">,</span><span class="dg">36558</span><span class="cm">,</span><span class="dg">37766</span><span class="cm">,</span><span class="dg">37760</span><span class="cm">,</span><span class="dg">37852</span><span class="cm">,</span><span class="dg">26350</span><span class="cm">,</span><span class="dg">22158</span><span class="cm">,</span><span class="dg">37881</span></div>
<svg class="abs" style="left:124px;top:876px" width="26" height="30" viewBox="0 0 26 30"><defs><radialGradient id="dg" cx="0.35" cy="0.3" r="0.8"><stop offset="0" stop-color="#3ad2ff"/><stop offset="1" stop-color="#0a7ee6"/></radialGradient></defs><path d="M1.5 1.5 L18 1.5 L24.5 8 L24.5 28.5 L1.5 28.5 Z" fill="#f8f9fb" stroke="#c6c9d1" stroke-width="1"/><path d="M18 1.5 L18 8 L24.5 8" fill="#e4e6ec" stroke="#cdd0d8" stroke-width="0.8"/><circle cx="12.8" cy="16.8" r="8.2" fill="url(#dg)"/><g fill="none" stroke="#fff" stroke-width="0.9" opacity="0.9"><path d="M12.4 9.5 Q8.5 14 10 20.5"/><path d="M12.4 9.5 Q16 12 17 16"/><path d="M5.5 15 Q11 18 17 16 L20.5 14.5"/><path d="M10 20.5 Q15 21 20.5 18.5"/><path d="M10 20.5 Q12 24 16 24.5"/></g></svg>
<div class="abs" style="left:160px;top:874px;width:1206px;height:38px;background:#fff0a6"></div>
<div class="rt" style="left:162px;top:874px;color:#000">s<span class="qm">?</span>ie=utf<span class="hy">-</span><span class="dg">8</span>&amp;newi=<span class="dg">1</span>&amp;mod=<span class="dg">11</span>&amp;isbd=<span class="dg">1</span>&amp;isid=<span class="dg">8</span>ED<span class="dg">698</span>EB<span class="dg">17765526</span>&amp;wd=charles.%<span class="dg">20</span>&amp;rsv<span class="us">_</span>spt=<span class="dg">1</span>&amp;rsv<span class="us">_</span>iqid=<span class="dg">0</span>xace<span class="dg">2</span>eb<span class="dg">0</span>e<span class="dg">0000</span></div>
<svg class="abs" style="left:124px;top:914px" width="26" height="30" viewBox="0 0 26 30"><path d="M1.5 1.5 L18 1.5 L24.5 8 L24.5 28.5 L1.5 28.5 Z" fill="#f8f9fb" stroke="#c6c9d1" stroke-width="1"/><path d="M18 1.5 L18 8 L24.5 8" fill="#e4e6ec" stroke="#cdd0d8" stroke-width="0.8"/><g stroke-width="1"><line x1="6" y1="8.5" x2="14" y2="8.5" stroke="#6a6d76"/><line x1="6" y1="10.5" x2="20" y2="10.5" stroke="#a3a8ba"/><line x1="6" y1="12.5" x2="20" y2="12.5" stroke="#a3a8ba"/><line x1="6" y1="14.5" x2="20" y2="14.5" stroke="#a3a8ba"/><line x1="6" y1="18.5" x2="14" y2="18.5" stroke="#6a6d76"/><line x1="6" y1="20.5" x2="20" y2="20.5" stroke="#a3a8ba"/><line x1="6" y1="22.5" x2="20" y2="22.5" stroke="#a3a8ba"/></g></svg>
<div class="rt" style="left:162px;top:912px;color:#000;letter-spacing:0.7px">sugrec<span class="qm">?</span>pre=<span class="dg">1</span>&amp;p=<span class="dg">3</span>&amp;ie=utf<span class="hy">-</span><span class="dg">8</span>&amp;json=<span class="dg">1</span>&amp;prod=pc&amp;from=pc<span class="us">_</span>web&amp;sugsid=<span class="dg">37782</span><span class="cm">,</span><span class="dg">36558</span><span class="cm">,</span><span class="dg">37766</span><span class="cm">,</span><span class="dg">37760</span><span class="cm">,</span><span class="dg">37852</span><span class="cm">,</span><span class="dg">26350</span><span class="cm">,</span><span class="dg">22158</span><span class="cm">,</span><span class="dg">37881</span></div>
<svg class="abs" style="left:124px;top:952px" width="26" height="30" viewBox="0 0 26 30"><defs><radialGradient id="dg" cx="0.35" cy="0.3" r="0.8"><stop offset="0" stop-color="#3ad2ff"/><stop offset="1" stop-color="#0a7ee6"/></radialGradient></defs><path d="M1.5 1.5 L18 1.5 L24.5 8 L24.5 28.5 L1.5 28.5 Z" fill="#f8f9fb" stroke="#c6c9d1" stroke-width="1"/><path d="M18 1.5 L18 8 L24.5 8" fill="#e4e6ec" stroke="#cdd0d8" stroke-width="0.8"/><circle cx="12.8" cy="16.8" r="8.2" fill="url(#dg)"/><g fill="none" stroke="#fff" stroke-width="0.9" opacity="0.9"><path d="M12.4 9.5 Q8.5 14 10 20.5"/><path d="M12.4 9.5 Q16 12 17 16"/><path d="M5.5 15 Q11 18 17 16 L20.5 14.5"/><path d="M10 20.5 Q15 21 20.5 18.5"/><path d="M10 20.5 Q12 24 16 24.5"/></g></svg>
<div class="abs" style="left:160px;top:950px;width:1206px;height:38px;background:#fff0a6"></div>
<div class="rt" style="left:162px;top:950px;color:#000">s<span class="qm">?</span>ie=utf<span class="hy">-</span><span class="dg">8</span>&amp;newi=<span class="dg">1</span>&amp;mod=<span class="dg">11</span>&amp;isbd=<span class="dg">1</span>&amp;isid=<span class="dg">8</span>ED<span class="dg">698</span>EB<span class="dg">17765526</span>&amp;wd=charles.&amp;rsv<span class="us">_</span>spt=<span class="dg">1</span>&amp;rsv<span class="us">_</span>iqid=<span class="dg">0</span>xace<span class="dg">2</span>eb<span class="dg">0</span>e<span class="dg">0000</span></div>
<svg class="abs" style="left:124px;top:990px" width="26" height="30" viewBox="0 0 26 30"><defs><radialGradient id="dg" cx="0.35" cy="0.3" r="0.8"><stop offset="0" stop-color="#3ad2ff"/><stop offset="1" stop-color="#0a7ee6"/></radialGradient></defs><path d="M1.5 1.5 L18 1.5 L24.5 8 L24.5 28.5 L1.5 28.5 Z" fill="#f8f9fb" stroke="#c6c9d1" stroke-width="1"/><path d="M18 1.5 L18 8 L24.5 8" fill="#e4e6ec" stroke="#cdd0d8" stroke-width="0.8"/><circle cx="12.8" cy="16.8" r="8.2" fill="url(#dg)"/><g fill="none" stroke="#fff" stroke-width="0.9" opacity="0.9"><path d="M12.4 9.5 Q8.5 14 10 20.5"/><path d="M12.4 9.5 Q16 12 17 16"/><path d="M5.5 15 Q11 18 17 16 L20.5 14.5"/><path d="M10 20.5 Q15 21 20.5 18.5"/><path d="M10 20.5 Q12 24 16 24.5"/></g></svg>
<div class="abs" style="left:160px;top:988px;width:1206px;height:38px;background:#fff0a6"></div>
<div class="rt" style="left:162px;top:988px;color:#000">s<span class="qm">?</span>ie=utf<span class="hy">-</span><span class="dg">8</span>&amp;newi=<span class="dg">1</span>&amp;mod=<span class="dg">11</span>&amp;isbd=<span class="dg">1</span>&amp;isid=<span class="dg">8</span>ED<span class="dg">698</span>EB<span class="dg">17765526</span>&amp;wd=charles&amp;rsv<span class="us">_</span>spt=<span class="dg">1</span>&amp;rsv<span class="us">_</span>iqid=<span class="dg">0</span>xace<span class="dg">2</span>eb<span class="dg">0</span>e<span class="dg">0000</span></div>
<svg class="abs" style="left:124px;top:1028px" width="26" height="30" viewBox="0 0 26 30"><defs><radialGradient id="dg" cx="0.35" cy="0.3" r="0.8"><stop offset="0" stop-color="#3ad2ff"/><stop offset="1" stop-color="#0a7ee6"/></radialGradient></defs><path d="M1.5 1.5 L18 1.5 L24.5 8 L24.5 28.5 L1.5 28.5 Z" fill="#f8f9fb" stroke="#c6c9d1" stroke-width="1"/><path d="M18 1.5 L18 8 L24.5 8" fill="#e4e6ec" stroke="#cdd0d8" stroke-width="0.8"/><circle cx="12.8" cy="16.8" r="8.2" fill="url(#dg)"/><g fill="none" stroke="#fff" stroke-width="0.9" opacity="0.9"><path d="M12.4 9.5 Q8.5 14 10 20.5"/><path d="M12.4 9.5 Q16 12 17 16"/><path d="M5.5 15 Q11 18 17 16 L20.5 14.5"/><path d="M10 20.5 Q15 21 20.5 18.5"/><path d="M10 20.5 Q12 24 16 24.5"/></g></svg>
<div class="abs" style="left:160px;top:1026px;width:1206px;height:38px;background:#fff0a6"></div>
<div class="rt" style="left:162px;top:1026px;color:#000">s<span class="qm">?</span>ie=utf<span class="hy">-</span><span class="dg">8</span>&amp;newi=<span class="dg">1</span>&amp;mod=<span class="dg">11</span>&amp;isbd=<span class="dg">1</span>&amp;isid=<span class="dg">8</span>ED<span class="dg">698</span>EB<span class="dg">17765526</span>&amp;wd=charles%<span class="dg">20</span>&amp;rsv<span class="us">_</span>spt=<span class="dg">1</span>&amp;rsv<span class="us">_</span>iqid=<span class="dg">0</span>xace<span class="dg">2</span>eb<span class="dg">0</span>e<span class="dg">0000</span></div>
<svg class="abs" style="left:124px;top:1066px" width="26" height="30" viewBox="0 0 26 30"><defs><radialGradient id="dg" cx="0.35" cy="0.3" r="0.8"><stop offset="0" stop-color="#3ad2ff"/><stop offset="1" stop-color="#0a7ee6"/></radialGradient></defs><path d="M1.5 1.5 L18 1.5 L24.5 8 L24.5 28.5 L1.5 28.5 Z" fill="#f8f9fb" stroke="#c6c9d1" stroke-width="1"/><path d="M18 1.5 L18 8 L24.5 8" fill="#e4e6ec" stroke="#cdd0d8" stroke-width="0.8"/><circle cx="12.8" cy="16.8" r="8.2" fill="url(#dg)"/><g fill="none" stroke="#fff" stroke-width="0.9" opacity="0.9"><path d="M12.4 9.5 Q8.5 14 10 20.5"/><path d="M12.4 9.5 Q16 12 17 16"/><path d="M5.5 15 Q11 18 17 16 L20.5 14.5"/><path d="M10 20.5 Q15 21 20.5 18.5"/><path d="M10 20.5 Q12 24 16 24.5"/></g></svg>
<div class="abs" style="left:160px;top:1064px;width:1206px;height:38px;background:#fff0a6"></div>
<div class="rt" style="left:162px;top:1064px;color:#000">s<span class="qm">?</span>ie=utf<span class="hy">-</span><span class="dg">8</span>&amp;newi=<span class="dg">1</span>&amp;mod=<span class="dg">11</span>&amp;isbd=<span class="dg">1</span>&amp;isid=<span class="dg">8</span>ED<span class="dg">698</span>EB<span class="dg">17765526</span>&amp;wd=charles%<span class="dg">20</span>h&amp;rsv<span class="us">_</span>spt=<span class="dg">1</span>&amp;rsv<span class="us">_</span>iqid=<span class="dg">0</span>xace<span class="dg">2</span>eb<span class="dg">0</span>e<span class="dg">0000</span></div>
<svg class="abs" style="left:124px;top:1104px" width="26" height="30" viewBox="0 0 26 30"><path d="M1.5 1.5 L18 1.5 L24.5 8 L24.5 28.5 L1.5 28.5 Z" fill="#f8f9fb" stroke="#c6c9d1" stroke-width="1"/><path d="M18 1.5 L18 8 L24.5 8" fill="#e4e6ec" stroke="#cdd0d8" stroke-width="0.8"/><g stroke-width="1"><line x1="6" y1="8.5" x2="14" y2="8.5" stroke="#6a6d76"/><line x1="6" y1="10.5" x2="20" y2="10.5" stroke="#a3a8ba"/><line x1="6" y1="12.5" x2="20" y2="12.5" stroke="#a3a8ba"/><line x1="6" y1="14.5" x2="20" y2="14.5" stroke="#a3a8ba"/><line x1="6" y1="18.5" x2="14" y2="18.5" stroke="#6a6d76"/><line x1="6" y1="20.5" x2="20" y2="20.5" stroke="#a3a8ba"/><line x1="6" y1="22.5" x2="20" y2="22.5" stroke="#a3a8ba"/></g></svg>
<div class="rt" style="left:162px;top:1102px;color:#000;letter-spacing:0.7px">sugrec<span class="qm">?</span>pre=<span class="dg">1</span>&amp;p=<span class="dg">3</span>&amp;ie=utf<span class="hy">-</span><span class="dg">8</span>&amp;json=<span class="dg">1</span>&amp;prod=pc&amp;from=pc<span class="us">_</span>web&amp;sugsid=<span class="dg">37782</span><span class="cm">,</span><span class="dg">36558</span><span class="cm">,</span><span class="dg">37766</span><span class="cm">,</span><span class="dg">37760</span><span class="cm">,</span><span class="dg">37852</span><span class="cm">,</span><span class="dg">26350</span><span class="cm">,</span><span class="dg">22158</span><span class="cm">,</span><span class="dg">37881</span></div>
<svg class="abs" style="left:124px;top:1142px" width="26" height="30" viewBox="0 0 26 30"><defs><radialGradient id="dg" cx="0.35" cy="0.3" r="0.8"><stop offset="0" stop-color="#3ad2ff"/><stop offset="1" stop-color="#0a7ee6"/></radialGradient></defs><path d="M1.5 1.5 L18 1.5 L24.5 8 L24.5 28.5 L1.5 28.5 Z" fill="#f8f9fb" stroke="#c6c9d1" stroke-width="1"/><path d="M18 1.5 L18 8 L24.5 8" fill="#e4e6ec" stroke="#cdd0d8" stroke-width="0.8"/><circle cx="12.8" cy="16.8" r="8.2" fill="url(#dg)"/><g fill="none" stroke="#fff" stroke-width="0.9" opacity="0.9"><path d="M12.4 9.5 Q8.5 14 10 20.5"/><path d="M12.4 9.5 Q16 12 17 16"/><path d="M5.5 15 Q11 18 17 16 L20.5 14.5"/><path d="M10 20.5 Q15 21 20.5 18.5"/><path d="M10 20.5 Q12 24 16 24.5"/></g></svg>
<div class="abs" style="left:160px;top:1140px;width:1206px;height:38px;background:#fff0a6"></div>
<div class="rt" style="left:162px;top:1140px;color:#000">s<span class="qm">?</span>ie=utf<span class="hy">-</span><span class="dg">8</span>&amp;newi=<span class="dg">1</span>&amp;mod=<span class="dg">11</span>&amp;isbd=<span class="dg">1</span>&amp;isid=<span class="dg">8</span>ED<span class="dg">698</span>EB<span class="dg">17765526</span>&amp;wd=charles%<span class="dg">20</span>hi&amp;rsv<span class="us">_</span>spt=<span class="dg">1</span>&amp;rsv<span class="us">_</span>iqid=<span class="dg">0</span>xace<span class="dg">2</span>eb<span class="dg">0</span>e<span class="dg">0000</span></div>
</div>
<div class="abs" style="left:14px;top:1288px;width:1366px;height:50px;background:#fff"></div>
<div class="abs" style="left:27px;top:1303px;font-size:26px;letter-spacing:0.4px;color:#1a1a1a;line-height:38px">Filter:</div>
<div class="abs" style="left:109px;top:1299px;width:1258px;height:60px;border:1.5px solid #e4e4e4;background:#fff"></div>
<div class="abs" style="left:1382px;top:130px;width:1148px;height:780px;overflow:hidden;background:#fff">
<div class="val" style="left:244px;top:-5px">GET /s?ie<span class="s">=</span>utf-<span class="s">8</span><span class="amp">&amp;</span>newi<span class="s">=1</span><span class="amp">&amp;</span>mod<span class="s">=11</span><span class="amp">&amp;</span>isbd<span class="s">=1</span><span class="amp">&amp;</span>isid<span class="s">=8</span>ED<span class="s">698</span>EB<span class="s">17765526</span><span class="amp">&amp;</span>wd<span class="s">=</span>ch<span class="amp">&amp;</span>rsv_spt<span class="s">=1</span><span class="amp">&amp;</span>r<span class="d">...</span></div>
<div class="lbl" style="right:915px;top:33px">Host</div>
<div class="val" style="left:244px;top:33px">www<span class="d">.</span>baidu<span class="d">.</span>com</div>
<div class="lbl" style="right:915px;top:71px">Connection</div>
<div class="val" style="left:244px;top:71px">keep-alive</div>
<div class="lbl" style="right:915px;top:109px">sec<span class="lh">-</span>ch<span class="lh">-</span>ua</div>
<div class="val" style="left:244px;top:109px"><span class="q">&quot;</span>Google Chrome<span class="q">&quot;</span>;v<span class="s">=</span><span class="q">&quot;</span><span class="s">107</span><span class="q">&quot;</span>, <span class="q">&quot;</span>Chromium<span class="q">&quot;</span>;v<span class="s">=</span><span class="q">&quot;</span><span class="s">107</span><span class="q">&quot;</span>, <span class="q">&quot;</span>Not<span class="s">=</span>A?Brand<span class="q">&quot;</span>;v<span class="s">=</span><span class="q">&quot;</span><span class="s">24</span><span class="q">&quot;</span></div>
<div class="lbl" style="right:915px;top:147px">is_xhr</div>
<div class="val" style="left:244px;top:147px"><span class="s">1</span></div>
<div class="lbl" style="right:915px;top:185px">sec<span class="lh">-</span>ch<span class="lh">-</span>ua<span class="lh">-</span>mobile</div>
<div class="val" style="left:244px;top:185px">?<span class="s">0</span></div>
<div class="lbl" style="right:915px;top:223px">User<span class="lh">-</span>Agent</div>
<div class="val" style="left:244px;top:223px">Mozilla<span class="s">/5</span><span class="d">.</span><span class="s">0</span> <span class="s">(</span>Macintosh; Intel Mac OS X <span class="s">10</span>_<span class="s">15</span>_<span class="s">7)</span> AppleWebKit<span class="s">/537</span><span class="d">.</span><span class="s">36</span> <span class="s">(</span>KHTML, like<span class="d">...</span></div>
<div class="lbl" style="right:915px;top:261px">is_params</div>
<div class="val" style="left:244px;top:261px">imes<span class="s">=0</span><span class="d">.</span><span class="s">1</span><span class="d">.</span><span class="s">57</span></div>
<div class="lbl" style="right:915px;top:299px">Accept</div>
<div class="val" style="left:244px;top:299px">*/*</div>
<div class="lbl" style="right:915px;top:337px">X<span class="lh">-</span>Requested<span class="lh">-</span>With</div>
<div class="val" style="left:244px;top:337px">XMLHttpRequest</div>
<div class="lbl" style="right:915px;top:375px">is_referer</div>
<div class="val" style="left:244px;top:375px">https<span class="s">:</span> //www<span class="d">.</span>baidu<span class="d">.</span>com/</div>
<div class="lbl" style="right:915px;top:413px">sec<span class="lh">-</span>ch<span class="lh">-</span>ua<span class="lh">-</span>platform</div>
<div class="val" style="left:244px;top:413px"><span class="q">&quot;</span>macOS<span class="q">&quot;</span></div>
<div class="lbl" style="right:915px;top:451px">Sec<span class="lh">-</span>Fetch<span class="lh">-</span>Site</div>
<div class="val" style="left:244px;top:451px">same-origin</div>
<div class="lbl" style="right:915px;top:489px">Sec<span class="lh">-</span>Fetch<span class="lh">-</span>Mode</div>
<div class="val" style="left:244px;top:489px">cors</div>
<div class="lbl" style="right:915px;top:527px">Sec<span class="lh">-</span>Fetch<span class="lh">-</span>Dest</div>
<div class="val" style="left:244px;top:527px">empty</div>
<div class="lbl" style="right:915px;top:565px">Referer</div>
<div class="val" style="left:244px;top:565px">https<span class="s">:</span> //www<span class="d">.</span>baidu<span class="d">.</span>com/</div>
<div class="lbl" style="right:915px;top:603px">Accept<span class="lh">-</span>Encoding</div>
<div class="val" style="left:244px;top:603px">gzip, deflate, br</div>
<div class="lbl" style="right:915px;top:641px">Accept<span class="lh">-</span>Language</div>
<div class="val" style="left:244px;top:641px">zh-CN,zh;q<span class="s">=0</span><span class="d">.</span><span class="s">9</span></div>
<div class="lbl" style="right:915px;top:679px">Cookie</div>
<div class="val" style="left:244px;top:679px">BIDUPSID<span class="s">=8</span>ED<span class="s">6986</span>CBAA<span class="s">8518</span>C<span class="s">53</span>ECCC<span class="s">6</span>A<span class="s">68</span>B<span class="s">96</span>F<span class="s">90</span>; PSTM<span class="s">=1664253535</span>; BD_UPN<span class="s">=12</span><span class="d">...</span></div>
</div>
<div class="abs" style="left:1382px;top:910px;width:1148px;height:2px;background:#9c9c9c"></div>
<div class="tabbar" style="left:1382px;top:912px;width:1148px;height:51px"></div>
<div class="pill" style="left:1390px;top:912px;width:156px;height:42px;border-radius:0 0 8px 8px"></div>
<div class="tab sel" style="left:1421px;top:922px">Headers</div>
<div class="tab" style="left:1581px;top:922px">Query String</div>
<div class="tab" style="left:1794px;top:922px">Cookies</div>
<div class="tab" style="left:1948px;top:922px">Raw</div>
<div class="abs" style="left:1382px;top:963px;width:1148px;height:333px;overflow:hidden;background:#fff">
<div class="lbl" style="right:849px;top:-5px">P<span class="s">3</span>p</div>
<div class="val" style="left:310px;top:-5px">CP<span class="s">=</span><span class="q">&quot;</span> OTI DSP COR IVA OUR IND COM <span class="q">&quot;</span></div>
<div class="lbl" style="right:849px;top:33px">Server</div>
<div class="val" style="left:310px;top:33px">BWS<span class="s">/1</span><span class="d">.</span><span class="s">1</span></div>
<div class="lbl" style="right:849px;top:71px">Set<span class="lh">-</span>Cookie</div>
<div class="val" style="left:310px;top:71px">BDRCVFR[feWj<span class="s">1</span>Vr<span class="s">5</span>u<span class="s">3</span>D]<span class="s">=</span>I<span class="s">67</span>x<span class="s">6</span>TjHwwYf<span class="s">0</span>; path<span class="s">=</span>/; domain<span class="s">=</span><span class="d">.</span>baidu<span class="d">.</span>com</div>
<div class="lbl" style="right:849px;top:109px">Set<span class="lh">-</span>Cookie</div>
<div class="val" style="left:310px;top:109px">BD_CK_SAM<span class="s">=1</span>;path<span class="s">=</span>/</div>
<div class="lbl" style="right:849px;top:147px">Set<span class="lh">-</span>Cookie</div>
<div class="val" style="left:310px;top:147px">PSINO<span class="s">=2</span>; domain<span class="s">=</span><span class="d">.</span>baidu<span class="d">.</span>com; path<span class="s">=</span>/</div>
<div class="lbl" style="right:849px;top:185px">Set<span class="lh">-</span>Cookie</div>
<div class="val" style="left:310px;top:185px">BDSVRTM<span class="s">=7</span>; path<span class="s">=</span>/</div>
<div class="lbl" style="right:849px;top:223px">Set<span class="lh">-</span>Cookie</div>
<div class="val" style="left:310px;top:223px">H_PS_PSSID<span class="s">=36558</span><span class="u">_</span><span class="s">37766</span><span class="u">_</span><span class="s">37760</span><span class="u">_</span><span class="s">37852</span><span class="u">_</span><span class="s">26350</span><span class="u">_</span><span class="s">22158</span><span class="u">_</span><span class="s">37881</span>; path<span class="s">=</span>/; domain<span class="s">=</span><span class="d">....</span></div>
<div class="lbl" style="right:849px;top:261px">Strict<span class="lh">-</span>Transport<span class="lh">-</span>Security</div>
<div class="val" style="left:310px;top:261px">max-age<span class="s">=172800</span></div>
<div class="lbl" style="right:849px;top:299px">Traceid</div>
<div class="val" style="left:310px;top:299px"><span class="s">1670191924024386996218432759381023452386</span></div>
</div>
<div class="abs" style="left:1518px;top:1020px;width:1020px;height:223px;border:8px solid #f44a47;border-radius:12px;background:#fff"></div>
<div class="lbl" style="right:871px;top:1034px">Set<span class="lh">-</span>Cookie</div>
<div class="val" style="left:1692px;top:1034px">BDRCVFR[feWj<span class="s">1</span>Vr<span class="s">5</span>u<span class="s">3</span>D]<span class="s">=</span>I<span class="s">67</span>x<span class="s">6</span>TjHwwYf<span class="s">0</span>; path<span class="s">=</span>/; domain<span class="s">=</span><span class="d">.</span>baidu<span class="d">.</span>com</div>
<div class="lbl" style="right:871px;top:1072px">Set<span class="lh">-</span>Cookie</div>
<div class="val" style="left:1692px;top:1072px">BD_CK_SAM<span class="s">=1</span>;path<span class="s">=</span>/</div>
<div class="lbl" style="right:871px;top:1110px">Set<span class="lh">-</span>Cookie</div>
<div class="val" style="left:1692px;top:1110px">PSINO<span class="s">=2</span>; domain<span class="s">=</span><span class="d">.</span>baidu<span class="d">.</span>com; path<span class="s">=</span>/</div>
<div class="lbl" style="right:871px;top:1148px">Set<span class="lh">-</span>Cookie</div>
<div class="val" style="left:1692px;top:1148px">BDSVRTM<span class="s">=7</span>; path<span class="s">=</span>/</div>
<div class="lbl" style="right:871px;top:1186px">Set<span class="lh">-</span>Cookie</div>
<div class="val" style="left:1692px;top:1186px">H_PS_PSSID<span class="s">=36558</span><span class="u">_</span><span class="s">37766</span><span class="u">_</span><span class="s">37760</span><span class="u">_</span><span class="s">37852</span><span class="u">_</span><span class="s">26350</span><span class="u">_</span><span class="s">22158</span><span class="u">_</span><span class="s">37881</span>; path<span class="s">=</span>/; domain<span class="s">=</span><span class="d">....</span></div>
<div class="abs" style="left:1382px;top:1296px;width:1148px;height:2px;background:#979797"></div>
<div class="tabbar" style="left:1382px;top:1298px;width:1148px;height:40px;background:linear-gradient(#e6e6e6,#dedede)"></div>
<div class="pill" style="left:1390px;top:1298px;width:156px;height:50px;border-radius:0 0 8px 8px"></div>
<div class="tab sel" style="left:1421px;top:1308px">Headers</div>
<div class="tab" style="left:1581px;top:1308px">Set Cookie</div>
<div class="tab" style="left:1771px;top:1308px">Text</div>
<div class="tab" style="left:1880px;top:1308px">Hex</div>
<div class="tab" style="left:1987px;top:1308px">Compressed</div>
<div class="tab" style="left:2199px;top:1308px">HTML</div>
<div class="tab" style="left:2328px;top:1308px">Raw</div>
<div class="abs" style="left:2358px;top:1280px;font-size:18px;color:rgba(120,120,120,0.55);white-space:nowrap;line-height:28px">@稀土掘金技术社区</div>
<svg class="abs" style="left:0;top:0" width="2552" height="78" viewBox="0 0 2552 78">
<defs>
<linearGradient id="recg" x1="0" y1="0" x2="0" y2="1"><stop offset="0" stop-color="#ff0a6a"/><stop offset="1" stop-color="#ff0010"/></linearGradient>
<linearGradient id="stopg" x1="0" y1="0" x2="0" y2="1"><stop offset="0" stop-color="#ff0a6a"/><stop offset="1" stop-color="#ff0010"/></linearGradient>
<linearGradient id="bluepen" x1="0" y1="0" x2="0" y2="1"><stop offset="0" stop-color="#2ec2ff"/><stop offset="1" stop-color="#0a8cf0"/></linearGradient>
<linearGradient id="greeng" x1="0" y1="0" x2="0" y2="1"><stop offset="0" stop-color="#22e08a"/><stop offset="1" stop-color="#0cc25a"/></linearGradient>
<pattern id="hazard" patternUnits="userSpaceOnUse" width="6" height="6" patternTransform="rotate(40)"><rect width="6" height="6" fill="#f7b500"/><rect width="3" height="6" fill="#0f3a63"/></pattern>
</defs>
<!-- broom -->
<line x1="738.5" y1="24.5" x2="746.5" y2="32.5" stroke="#c2841e" stroke-width="3.4" stroke-linecap="round"/>
<path d="M743.5 35.5 Q744 30 750 29.5 Q753 29.5 756 31.5 L762 35.5 L766 37.5 L764 40 L762.5 43 L759 46 L755.5 49.5 L752.5 52 L750.5 49 L747.5 45 Q744 40 743.5 35.5 Z" fill="#ffc800"/>
<path d="M744.5 39.5 L756 31.5" stroke="#f2b000" stroke-width="0.9"/>
<path d="M752 47 L757 40 M757 44 L761 39" stroke="#ffd84a" stroke-width="1.3"/>
<!-- record -->
<circle cx="882" cy="38" r="14.8" fill="#f4f7fc"/>
<circle cx="882" cy="38" r="11.5" fill="none" stroke="#ff8a9a" stroke-width="2"/>
<circle cx="882" cy="38" r="7.9" fill="url(#recg)"/>
<!-- lock -->
<path d="M969.5 35 L969.5 29 Q969.5 22.5 976 22.5 Q982.5 22.5 982.5 29 L982.5 35" fill="none" stroke="#c6c8d6" stroke-width="3"/>
<rect x="964.5" y="34.5" width="23" height="17" rx="3" fill="#f7f8fc"/>
<rect x="964.5" y="41.8" width="23" height="6" fill="url(#hazard)"/>
<!-- turtle -->
<path d="M1058.5 31 Q1061 37 1064.5 41" stroke="#cfd1de" stroke-width="4.2" fill="none" stroke-linecap="round"/>
<circle cx="1058" cy="30.8" r="4.2" fill="#d6d8e4"/>
<circle cx="1057" cy="30.8" r="1.1" fill="#1e1e22"/>
<path d="M1063 42 Q1064 30 1073.5 30 Q1083 30 1084 42 Z" fill="#5d5f68"/>
<g stroke="#3e4048" stroke-width="0.8" fill="none"><path d="M1066 36 L1081 36"/><path d="M1070 31 L1069 42"/><path d="M1074 30 L1074 42"/><path d="M1078 31 L1079 42"/></g>
<circle cx="1063.2" cy="48" r="2.3" fill="#d6d8e4" stroke="#9a9cab" stroke-width="0.7"/>
<circle cx="1082" cy="48" r="2.3" fill="#d6d8e4" stroke="#9a9cab" stroke-width="0.7"/>
<rect x="1060" y="40.5" width="26" height="5" rx="2.5" fill="#55575f"/>
<!-- stop sign -->
<polygon points="1149,38 1156.5,24.7 1171.5,24.7 1179,38 1171.5,51.3 1156.5,51.3" fill="#f4f7fc"/>
<polygon points="1153,38 1158.5,28 1169.5,28 1175,38 1169.5,48 1158.5,48" fill="url(#stopg)"/>
<path d="M1158 38.6 L1162 42.6 L1168.5 33.5" fill="none" stroke="#fff" stroke-width="2.6"/>
<!-- pen -->
<path d="M1288 33 L1297 24.5 L1300 24.5" fill="none" stroke="#2a2a2e" stroke-width="1.6"/>
<line x1="1281" y1="50.5" x2="1292" y2="40" stroke="#d8dae6" stroke-width="6" stroke-linecap="round"/>
<line x1="1280" y1="52" x2="1281.5" y2="50.5" stroke="#222" stroke-width="2" stroke-linecap="round"/>
<line x1="1294" y1="38.5" x2="1303.5" y2="29.5" stroke="url(#bluepen)" stroke-width="9" stroke-linecap="round"/>
<line x1="1305.5" y1="27" x2="1308.2" y2="24.3" stroke="#dcdee8" stroke-width="3.2" stroke-linecap="round"/>
<!-- refresh -->
<path d="M1397.5 29.5 A11.3 11.3 0 1 0 1398.5 44" fill="none" stroke="#0ea2f8" stroke-width="5.4"/>
<polygon points="1390.5,35.5 1402.2,24.6 1402.2,36.8" fill="#0ea2f8"/>
<!-- check -->
<path d="M1470.5 40 L1477 46.5 L1494.5 27.5" fill="none" stroke="url(#greeng)" stroke-width="5.5"/>
<!-- basket -->
<line x1="1603" y1="34" x2="1609" y2="24" stroke="#909098" stroke-width="1.4"/>
<line x1="1622" y1="34" x2="1616" y2="24" stroke="#909098" stroke-width="1.4"/>
<circle cx="1608.8" cy="23.8" r="1.9" fill="#3e3f46"/>
<circle cx="1616" cy="23.8" r="1.9" fill="#3e3f46"/>
<path d="M1600 36 L1625 36 L1624 48.5 Q1624 50 1622.5 50 L1602.5 50 Q1601 50 1601 48.5 Z" fill="url(#greeng)"/>
<rect x="1597" y="32" width="31" height="4.6" rx="2.3" fill="#1fde80"/>
<g stroke="#d6f8e6" stroke-width="1.1"><line x1="1604.5" y1="39" x2="1604.5" y2="47"/><line x1="1608.5" y1="39" x2="1608.5" y2="47"/><line x1="1612.5" y1="39" x2="1612.5" y2="47"/><line x1="1616.5" y1="39" x2="1616.5" y2="47"/><line x1="1620.5" y1="39" x2="1620.5" y2="47"/></g>
<!-- tools -->
<path d="M1708 39.5 L1715.5 45" stroke="#b9bcca" stroke-width="2"/>
<path d="M1714 43 L1717.5 42 L1721.5 48.5 L1719 51.5 L1716.5 50.5 Z" fill="#cfd2de" stroke="#aeb1c0" stroke-width="0.8"/>
<path d="M1691 49.5 Q1690.5 52.5 1693.5 52 L1708 40.5 L1705.5 37.5 L1691.5 47 Z" fill="#4f5159"/>
<circle cx="1694.8" cy="48.8" r="2.6" fill="#3f4148"/>
<circle cx="1694.8" cy="48.8" r="0.9" fill="#e6e6ea"/>
<path d="M1709 39 L1712 35" stroke="#c0c3d0" stroke-width="3"/>
<path d="M1714.5 22.5 A7.6 7.6 0 1 0 1721.6 28.5 L1717.5 30 A3.3 3.3 0 1 1 1713.5 26 Z" fill="#d7d9e4" stroke="#aeb1c0" stroke-width="0.8"/>
<line x1="1693.5" y1="25" x2="1704.5" y2="35.5" stroke="#0aa2f6" stroke-width="7.5" stroke-linecap="round"/>
<line x1="1703" y1="34.5" x2="1708" y2="39" stroke="#0a8ee8" stroke-width="5"/>
<g stroke="#0a86dc" stroke-width="0.9" opacity="0.8"><line x1="1694.5" y1="23.6" x2="1702" y2="30.8"/><line x1="1692.5" y1="25.8" x2="1700" y2="33"/></g>
<!-- gear -->
<polygon points="1800.00,22.40 1801.88,24.93 1804.40,23.03 1805.48,25.99 1808.43,24.88 1808.64,28.02 1811.79,27.78 1811.10,30.86 1814.19,31.52 1812.67,34.28 1815.44,35.78 1813.20,38.00 1815.44,40.22 1812.67,41.72 1814.19,44.48 1811.10,45.14 1811.79,48.22 1808.64,47.98 1808.43,51.12 1805.48,50.01 1804.40,52.97 1801.88,51.07 1800.00,53.60 1798.12,51.07 1795.60,52.97 1794.52,50.01 1791.57,51.12 1791.36,47.98 1788.21,48.22 1788.90,45.14 1785.81,44.48 1787.33,41.72 1784.56,40.22 1786.80,38.00 1784.56,35.78 1787.33,34.28 1785.81,31.52 1788.90,30.86 1788.21,27.78 1791.36,28.02 1791.57,24.88 1794.52,25.99 1795.60,23.03 1798.12,24.93" fill="#d3d6e2" stroke="#b3b6c6" stroke-width="0.8"/>
<circle cx="1800" cy="38" r="11.3" fill="#d6d9e4" stroke="#a9adbd" stroke-width="1.6"/>
<g stroke="#a9adbd" stroke-width="2"><line x1="1800.00" y1="32.80" x2="1800.00" y2="27.00"/><line x1="1804.95" y1="36.39" x2="1810.46" y2="34.60"/><line x1="1803.06" y1="42.21" x2="1806.47" y2="46.90"/><line x1="1796.94" y1="42.21" x2="1793.53" y2="46.90"/><line x1="1795.05" y1="36.39" x2="1789.54" y2="34.60"/></g>
<circle cx="1800" cy="38" r="4.6" fill="#d6d9e4" stroke="#a9adbd" stroke-width="1.5"/>
<circle cx="1800" cy="38" r="2" fill="#d0d3de" stroke="#a9adbd" stroke-width="1.2"/>
</svg>
</div></body></html>
